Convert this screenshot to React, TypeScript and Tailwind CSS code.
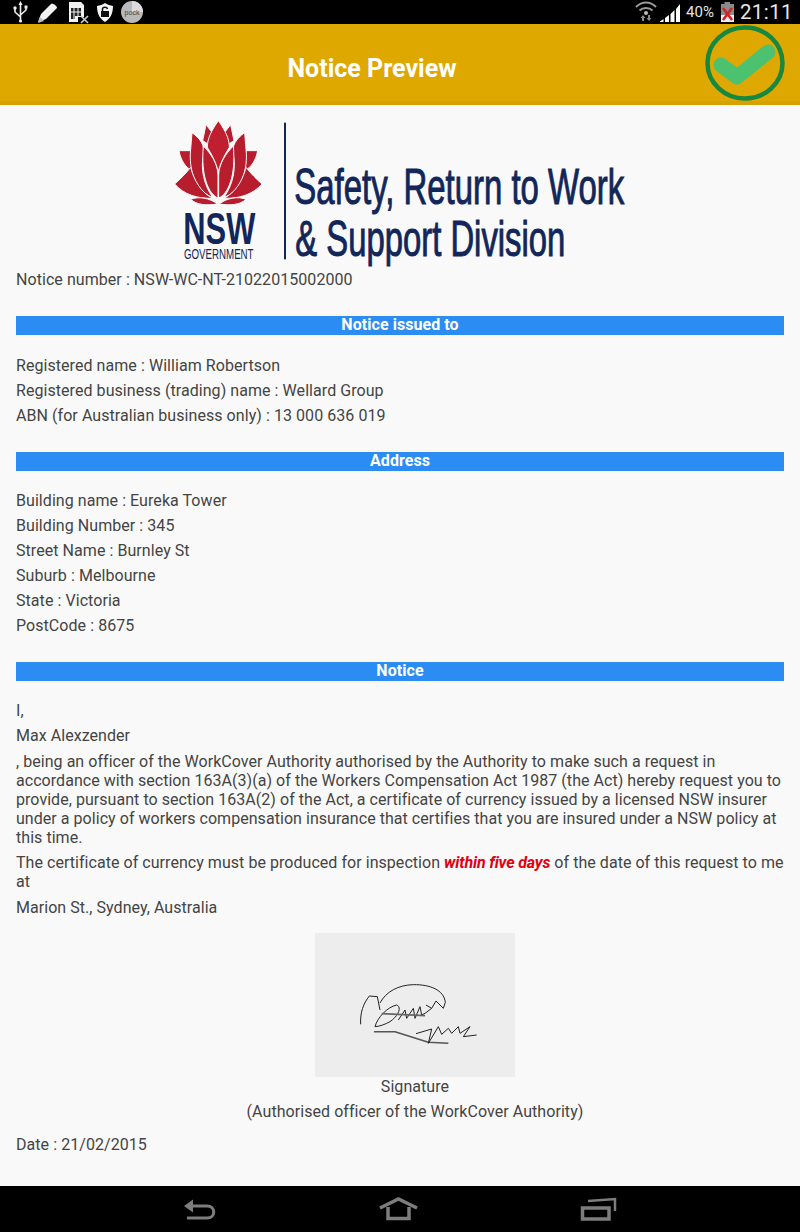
import React from 'react';

const SectionBar = ({ title }: { title: string }) => (
  <div className="h-[19px] bg-[#2b8cf3] text-center text-[16px] leading-[18px] font-bold text-white shadow-[0_-2px_0_#fdf7ea,0_2px_0_#fdf7ea]">
    {title}
  </div>
);

const Rows = ({ items }: { items: string[] }) => (
  <div className="flex flex-col gap-[6px]">
    {items.map((item) => (
      <p key={item}>{item}</p>
    ))}
  </div>
);

const LeftPetals = () => (
  <g fill="#b81d2d" stroke="#f9f9f9" strokeWidth="3" strokeLinejoin="round">
    <path d="M138 44 L160 72 L160 112 L128 92 Z" />
    <path d="M57 122 L92 122 L96 182 C76 172 62 150 57 122 Z" />
    <path d="M96 68 C122 86 136 108 130 135 C122 175 130 222 158 262 C112 246 88 190 91 130 Z" />
    <path d="M44 222 C62 206 76 192 92 172 C102 212 124 248 158 265 C112 266 72 254 44 222 Z" />
    <path d="M130 108 C152 130 173 160 174 195 L174 264 C146 252 122 200 130 108 Z" />
    <path d="M92 268 C115 258 150 264 172 282 C140 287 110 285 92 268 Z" />
  </g>
);

const NswLogo = () => (
  <svg viewBox="0 0 1440 480" className="mx-auto block h-[160px] w-[480px]" fontFamily="'Liberation Sans Narrow', 'Liberation Sans', sans-serif">
    <LeftPetals />
    <g transform="translate(350,0) scale(-1,1)">
      <LeftPetals />
    </g>
    <path
      d="M175 32 C197 64 208 86 208 112 C196 132 184 152 175 184 C166 152 154 132 142 112 C142 86 153 64 175 32 Z"
      fill="#bf1f2f"
      stroke="#f9f9f9"
      strokeWidth="3"
    />
    <text x="70" y="403" fontSize="135" fontWeight="700" fill="#12265a" textLength="216" lengthAdjust="spacingAndGlyphs">NSW</text>
    <text transform="translate(72,447) scale(0.77,1)" fontSize="46" fill="#12265a" textLength="271" lengthAdjust="spacingAndGlyphs">GOVERNMENT</text>
    <rect x="372" y="38" width="6" height="410" fill="#12265a" />
    <text transform="translate(403,282) scale(0.806,1)" fontSize="148" fill="#12265a" stroke="#12265a" strokeWidth="3" textLength="1228" lengthAdjust="spacingAndGlyphs">Safety, Return to Work</text>
    <text transform="translate(406,437) scale(0.806,1)" fontSize="148" fill="#12265a" stroke="#12265a" strokeWidth="3" textLength="1005" lengthAdjust="spacingAndGlyphs">&amp; Support Division</text>
  </svg>
);

const StatusLeft = () => (
  <svg width="150" height="24" viewBox="0 0 150 24" className="block">
    {/* usb */}
    <path d="M20.500 3 V21 M20.500 17 L15 12 V9 M20.500 15 L26 10 V8" stroke="#eee" strokeWidth="1.6" fill="none" />
    <path d="M20.500 1 L18.500 5 H22.500 Z" fill="#eee" />
    <circle cx="15" cy="8" r="1.7" fill="#eee" />
    <rect x="24.500" y="5.500" width="3" height="3" fill="#eee" />
    <circle cx="20.500" cy="21" r="1.6" fill="#eee" />
    {/* pencil */}
    <path d="M38 22 L41 14 L51 4 C53 3 57 6 57 8 L46 19 Z" fill="#f2f2f2" />
    <path d="M38 23 L40 17 L44 21 Z" fill="#bbb" />
    {/* sim with x */}
    <path d="M69 2 H81 L84 5 V17 H78 V22 H69 Z" fill="#f2f2f2" />
    <path d="M71 8 H81 V16 H75 V19 H71 Z" fill="#222" />
    <path d="M74 8 V19 M78 8 V16 M71 12 H81" stroke="#f2f2f2" strokeWidth="1" />
    <path d="M81 16 L88 23 M88 16 L81 23" stroke="#ccc" strokeWidth="1.6" />
    {/* shield */}
    <path d="M105 3 C108 5 110 5 113 6 C113 14 110 19 105 22 C100 19 97 14 97 6 C100 5 102 5 105 3 Z" fill="#f5f5f5" />
    <rect x="101" y="11" width="8" height="6" fill="#111" />
    <path d="M102.500 11 V9 C102.500 6.500 107 6.500 107.500 9" stroke="#111" strokeWidth="1.5" fill="none" />
    {/* coin */}
    <circle cx="132" cy="12" r="11" fill="#b9b9b9" />
    <path d="M132 1 A11 11 0 0 1 143 12 L132 12 Z" fill="#dcdcdc" />
    <text x="132" y="15" fontSize="7" textAnchor="middle" fill="#444" fontFamily="'Liberation Sans', sans-serif">pock</text>
  </svg>
);

const StatusRight = () => (
  <div className="flex items-center">
    <svg width="50" height="24" viewBox="0 0 50 24" className="block">
      {/* wifi */}
      <path d="M1 7 C7 1 15 1 21 7" stroke="#9a9a9a" strokeWidth="2" fill="none" />
      <path d="M4.500 10.500 C8 7 14 7 17.500 10.500" stroke="#9a9a9a" strokeWidth="2" fill="none" />
      <circle cx="11" cy="13" r="2" fill="#bbb" />
      <path d="M8 15 L5.500 18 H7 V21 H9 V18 H10.500 Z M14 21 L11.500 18 H13 V15 H15 V18 H16.500 Z" fill="#888" />
      {/* signal */}
      <path d="M25 22 H28.500 V19 L25 21.500 Z M30 22 H34 V15 L30 18 Z M35.500 22 H39.500 V10 L35.500 14 Z M41 22 H45 V4 L41 9 Z" fill="#fff" />
    </svg>
    <span className="ml-[1px] w-[34px] text-[15px] leading-[24px] text-[#e4e4e4]">40%</span>
    <svg width="15" height="24" viewBox="0 0 15 24" className="block">
      <path d="M4.500 2 H10 V4 H14 V22 H1 V4 H4.500 Z" fill="#8a8a8a" />
      <rect x="1" y="15" width="13" height="7" fill="#eee" />
      <path d="M3 8 L12 20 M12 8 L3 20" stroke="#d4222a" strokeWidth="2.6" />
    </svg>
    <span className="ml-[5px] mr-[7px] text-[20.5px] leading-[24px] tracking-[0.4px] text-[#e8e8e8]">21:11</span>
  </div>
);

const ConfirmCheck = () => (
  <svg width="80" height="80" viewBox="0 0 80 80" className="block">
    <ellipse cx="40" cy="40" rx="37.5" ry="35.5" fill="none" stroke="#16883f" strokeWidth="4.5" />
    <path d="M16 42 L32 54 L63 29" fill="none" stroke="#4cc270" strokeWidth="15" strokeLinecap="round" strokeLinejoin="round" />
  </svg>
);

const Signature = () => (
  <div className="mx-auto h-[144px] w-[200px] bg-[#ededed]">
    <svg viewBox="45 24 600 432" className="block h-[144px] w-[200px]" fill="none" stroke="#222" strokeWidth="3" strokeLinejoin="round">
      <path d="M182 298 C180 262 190 236 208 213 L232 215 L240 255" />
      <path d="M240 234 C258 200 295 180 340 179 C390 178 432 195 436 232 L430 250 L408 228 L395 250 L378 240" />
      <path d="M225 305 C232 278 262 246 290 240 C306 246 296 272 270 290 C255 298 240 304 225 305 Z" />
      <path d="M295 285 L315 255 L320 280 L340 250 L345 280 L360 245 L365 270 L375 265 L395 250" />
      <path d="M245 266 L375 272" stroke="#666" strokeWidth="5" />
      <path d="M222 320 L285 320 L385 352 L445 355" stroke="#555" strokeWidth="4.5" />
      <path d="M348 326 L395 312 L385 355 L415 305 L425 328 L445 310 L455 325 L475 305 L480 325 L510 305 L490 335 L530 330" />
    </svg>
  </div>
);

const NavBar = () => (
  <div className="h-[46px] bg-black">
    <svg width="800" height="46" viewBox="0 0 800 46" className="block" fill="none" stroke="#7d7d7d" strokeWidth="3">
      <path d="M188 20 H207 C216 20 216 32 207 32 H187" />
      <path d="M184 20 L193 13.500 V26.500 Z" fill="#7d7d7d" stroke="none" />
      <path d="M380 22 L398.500 13 L417 22" strokeWidth="3.5" />
      <path d="M388 21 V32.500 H409 V21" strokeWidth="3.5" />
      <path d="M582.500 22 H609 V33 H582.500 Z" strokeWidth="3.5" />
      <path d="M588 15 L615 13 V25" strokeWidth="2.5" />
    </svg>
  </div>
);

export default function App() {
  return (
    <div className="flex h-[1232px] w-[800px] flex-col overflow-hidden bg-[#f9f9f9] font-['Roboto',sans-serif] text-[16px] leading-[19px] tracking-[0.06px] text-[#444444]">
      <div className="flex h-[24px] items-center justify-between bg-black">
        <StatusLeft />
        <StatusRight />
      </div>

      <header className="flex h-[81px] items-center border-b-[4px] border-[#d9a100] bg-[#dfa800] pr-[15px]">
        <h1 className="flex-1 pt-[12px] pl-[39px] text-center text-[25px] font-bold tracking-normal text-white">Notice Preview</h1>
        <ConfirmCheck />
      </header>

      <main className="flex-1 px-[16px] pt-[5px]">
        <NswLogo />
        <p>Notice number : NSW-WC-NT-21022015002000</p>

        <div className="mt-[27px]">
          <SectionBar title="Notice issued to" />
        </div>
        <div className="mt-[21px]">
          <Rows
            items={[
              'Registered name : William Robertson',
              'Registered business (trading) name : Wellard Group',
              'ABN (for Australian business only) : 13 000 636 019',
            ]}
          />
        </div>

        <div className="mt-[27px]">
          <SectionBar title="Address" />
        </div>
        <div className="mt-[20px]">
          <Rows
            items={[
              'Building name : Eureka Tower',
              'Building Number : 345',
              'Street Name : Burnley St',
              'Suburb : Melbourne',
              'State : Victoria',
              'PostCode : 8675',
            ]}
          />
        </div>

        <div className="mt-[27px]">
          <SectionBar title="Notice" />
        </div>
        <div className="mt-[20px] flex flex-col gap-[6px] tracking-[0.045px]">
          <p>I,</p>
          <p>Max Alexzender</p>
          <p className="mt-[1px]">
            , being an officer of the WorkCover Authority authorised by the Authority to make such a request in accordance
            with section 163A(3)(a) of the Workers Compensation Act 1987 (the Act) hereby request you to provide, pursuant
            to section 163A(2) of the Act, a certificate of currency issued by a licensed NSW insurer under a policy of
            workers compensation insurance that certifies that you are insured under a NSW policy at this time.
          </p>
          <p>
            The certificate of currency must be produced for inspection{' '}
            <b className="font-bold tracking-[-0.15px] text-[#e0000f] italic">within five days</b> of the date of this request to me at
          </p>
          <p className="mt-[1px]">Marion St., Sydney, Australia</p>
        </div>

        <div className="mt-[16px] pl-[30px]">
          <Signature />
          <div className="flex flex-col gap-[6px] text-center">
            <p>Signature</p>
            <p>(Authorised officer of the WorkCover Authority)</p>
          </div>
        </div>
        <p className="mt-[14px]">Date : 21/02/2015</p>
      </main>

      <NavBar />
    </div>
  );
}
